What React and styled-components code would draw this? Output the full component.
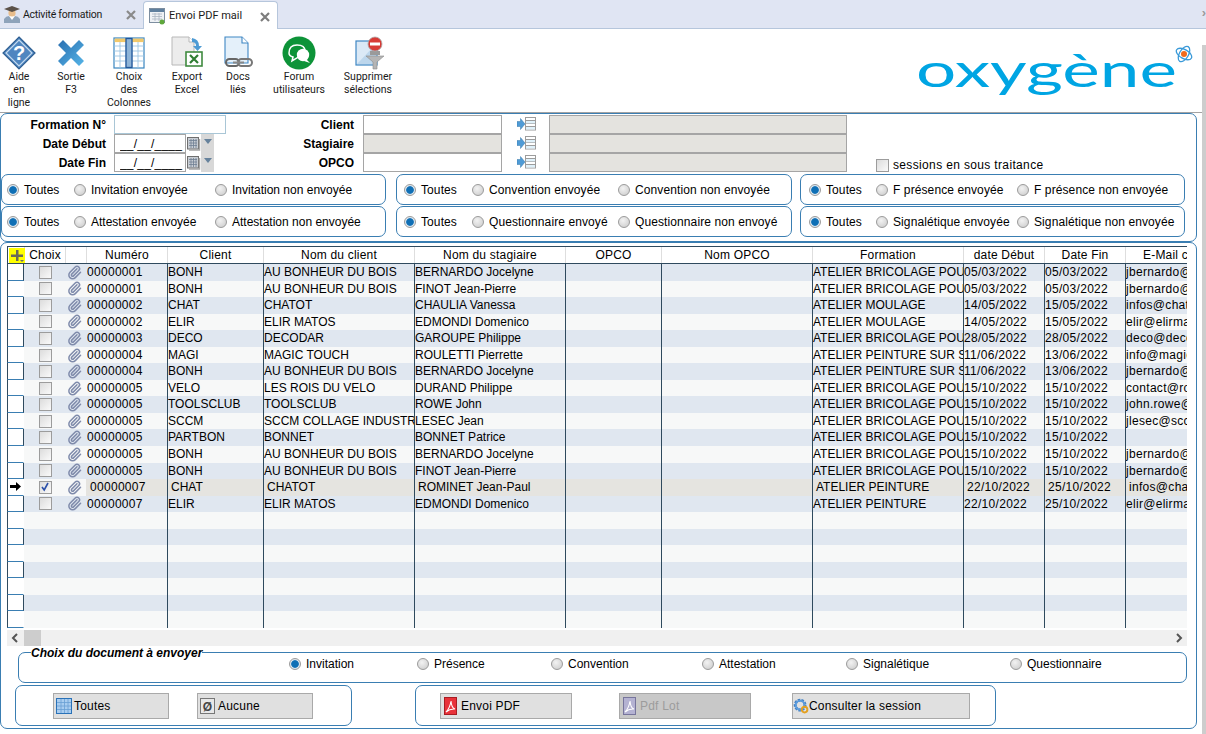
import React from 'react';
import styled, { createGlobalStyle } from 'styled-components';
import { Paperclip } from 'lucide-react';

const Global = createGlobalStyle`
  html, body { margin: 0; padding: 0; background: #fff; overflow: hidden; }
  * { box-sizing: border-box; }
  body { font-family: "Liberation Sans", Arial, sans-serif; font-size: 12px; color: #000; }
`;

const BLUE = '#3a7eb2';
const DARK = '#2f4a5e';

const Page = styled.div`
  position: relative;
  width: 1206px;
  height: 734px;
  overflow: hidden;
  background: #fff;
`;
const PageScroll = styled.div`
  position: absolute;
  right: 0;
  top: 45px;
  bottom: 0;
  width: 4px;
  background: #cdcdcd;
`;

/* Tabs */
const TabBar = styled.div`
  height: 29px;
  display: flex;
  align-items: flex-end;
  background: #e0e5f3;
  border-bottom: 1px solid #b6c6dc;
  position: relative;
`;
const Tab = styled.div`
  display: flex;
  align-items: center;
  height: 28px;
  width: ${p => p.$w}px;
  padding-left: ${p => (p.$active ? 5 : 3)}px;
  margin-bottom: ${p => (p.$active ? '-1px' : '0')};
  background: ${p => (p.$active ? '#fff' : 'transparent')};
  border: ${p => (p.$active ? '1px solid #b6c6dc' : 'none')};
  border-bottom: none;
  border-radius: 4px 4px 0 0;
  font-family: Roboto, sans-serif;
  font-size: ${p => (p.$active ? '11px' : '10.5px')};
  letter-spacing: ${p => (p.$active ? '0' : '-0.25px')};
  color: #1a1a1a;
`;
const TabLabel = styled.span`
  margin-left: ${p => p.$ml}px;
  flex: 1;
  white-space: nowrap;
`;
const TabClose = styled.svg`
  width: 10px;
  height: 10px;
  margin-right: 7px;
  margin-top: 2px;
  flex: none;
`;
const TabScrollGlyph = styled.span`
  position: absolute;
  right: 0;
  top: 5px;
  font-size: 13px;
  font-weight: bold;
  color: #9a9a9a;
`;

/* Toolbar */
const Toolbar = styled.div`
  height: 84px;
  display: flex;
  border-bottom: 1px solid #a3a3a3;
`;
const ToolItem = styled.div`
  width: ${p => p.$w}px;
  flex: none;
  display: flex;
  flex-direction: column;
  align-items: center;
  padding-top: 7px;
`;
const ToolIcon = styled.svg`
  width: 34px;
  height: 34px;
  flex: none;
`;
const ToolLabel = styled.div`
  font-family: Roboto, sans-serif;
  font-size: 10.5px;
  line-height: 13px;
  text-align: center;
  color: #1a1a1a;
  white-space: pre-line;
`;
const Logo = styled.svg`
  margin-left: auto;
  margin-right: 13px;
  margin-top: 13px;
  width: 276px;
  height: 60px;
`;

/* Panels */
const RoundPanel = styled.div`
  border: 1px solid ${BLUE};
  border-radius: 7px;
`;
const FilterPanel = styled(RoundPanel)`
  width: 1197px;
  height: 129px;
  padding-top: 1px;
`;
const FormGrid = styled.div`
  display: grid;
  grid-template-columns: 113px 112px 137px 139px 47px 298px 1fr;
  grid-auto-rows: 19px;
  height: 59px;
`;
const FieldLabel = styled.div`
  font-weight: bold;
  text-align: right;
  padding-right: ${p => p.$pr}px;
  line-height: 20px;
`;
const TextField = styled.input`
  display: block;
  width: ${p => p.$w || '100%'};
  height: 19px;
  margin: 0;
  padding: 0 3px;
  border: 1px solid ${p => (p.$blue ? '#a9c6d6' : '#a5a5a5')};
  background: ${p => (p.$off ? '#e4e3df' : '#fff')};
  font: 12px "Liberation Sans", sans-serif;
  outline: none;
`;
const DateWrap = styled.div`
  display: flex;
  align-items: center;
`;
const DateField = styled(TextField)`
  width: 72px;
  letter-spacing: 0.2px;
  padding: 0 0 0 5px;
`;
const CalButton = styled.svg`
  width: 14px;
  height: 14px;
  margin-left: 1px;
  flex: none;
`;
const DropButton = styled.div`
  width: 13px;
  height: 19px;
  background: #d8d8d8;
  display: flex;
  justify-content: center;
  padding-top: 5px;
  &::before {
    content: '';
    width: 0;
    height: 0;
    border-left: 4px solid transparent;
    border-right: 4px solid transparent;
    border-top: 5px solid #66829c;
  }
`;
const LookupIcon = styled.svg`
  width: 19px;
  height: 14px;
  margin: 2px 0 0 15px;
`;
const SousTraitance = styled.label`
  display: flex;
  align-items: center;
  gap: 4px;
  padding: 5px 0 0 29px;
  white-space: nowrap;
  letter-spacing: 0.35px;
`;
const Check = styled.span`
  width: 13px;
  height: 13px;
  flex: none;
  display: inline-flex;
  align-items: center;
  justify-content: center;
  border: 1px solid #9c9c9c;
  background: linear-gradient(135deg, #dcdcdc, #fafafa);
`;
const GroupGrid = styled.div`
  display: grid;
  grid-template-columns: 395px 404px 385px;
  row-gap: 1px;
`;
const RadioGroup = styled(RoundPanel)`
  width: ${p => p.$w}px;
  height: 31px;
  display: flex;
  align-items: center;
  padding-left: ${p => p.$pl}px;
`;
const RadioOption = styled.label`
  display: flex;
  align-items: center;
  width: ${p => p.$w}px;
  flex: none;
  gap: 5px;
  white-space: nowrap;
  letter-spacing: ${p => (p.$tight ? '0' : '0.1px')};
`;
const RadioDot = styled.span`
  width: 12px;
  height: 12px;
  flex: none;
  border-radius: 50%;
  border: 1px solid #9b9b9b;
  background: ${p =>
    p.$on
      ? 'radial-gradient(circle, #0f6fb5 0 3.4px, #d9e6f0 4.2px, #eef1f4 100%)'
      : 'radial-gradient(circle at 40% 35%, #f2f2f2, #c9c9c9)'};
`;

/* Data grid */
const GridPanel = styled(RoundPanel)`
  width: 1197px;
  height: 487px;
  padding: 3px 0 0 6px;
`;
const COLS = '17px 41px 21px 81px 96px 151px 151px 96px 151px 151px 81px 81px 62px';
const Table = styled.div`
  width: 1180px;
  height: 383px;
  overflow: hidden;
`;
const HeaderRow = styled.div`
  display: grid;
  grid-template-columns: ${COLS};
  height: 18px;
  border-top: 1px solid ${DARK};
  border-bottom: 1px solid ${DARK};
`;
const HeadCell = styled.div`
  text-align: ${p => (p.$pl ? 'left' : 'center')};
  padding-left: ${p => p.$pl || 0}px;
  line-height: 16px;
  letter-spacing: 0.2px;
  white-space: nowrap;
  overflow: hidden;
  border-left: 1px solid #dedede;
`;
const Corner = styled.div`
  border-left: 1px solid ${DARK};
  position: relative;
  overflow: visible;
`;
const CornerIcon = styled.svg`
  position: absolute;
  left: 1px;
  top: 1px;
  width: 16px;
  height: 15px;
  display: block;
`;
const Row = styled.div`
  display: grid;
  grid-template-columns: ${COLS};
  height: 16.56px;
  background: ${p => (p.$alt ? '#f7f8f8' : '#e0e7f0')};
`;
const RowHead = styled.div`
  background: #fff;
  border-left: 1px solid ${DARK};
  border-right: 1px solid ${p => (p.$alt ? '#fff' : DARK)};
  border-bottom: 1px solid ${BLUE};
  display: flex;
  align-items: center;
  justify-content: center;
`;
const CheckCell = styled.div`
  display: flex;
  align-items: center;
  justify-content: center;
  padding-left: 1px;
`;
const ClipCell = styled.div`
  display: flex;
  align-items: center;
  justify-content: center;
  padding-right: 3px;
  color: #7f8bab;
`;
const Cell = styled.div`
  border-left: 1px solid ${p => (p.$first ? 'transparent' : DARK)};
  padding-left: ${p => (p.$sel ? 3 : 0)}px;
  padding-top: 1px;
  background: ${p => (p.$sel ? '#e5e4e0' : 'transparent')};
  line-height: 15px;
  white-space: nowrap;
  overflow: hidden;
  letter-spacing: ${p => (p.$sp ? '0.3px' : '0')};
`;
const HScroll = styled.div`
  width: 1180px;
  height: 16px;
  margin-top: 1px;
  background: #f0f0f0;
  display: flex;
  align-items: center;
`;
const ScrollArrow = styled.svg`
  width: 17px;
  height: 16px;
  flex: none;
`;
const ScrollThumb = styled.div`
  width: 17px;
  height: 16px;
  background: #cdcdcd;
`;
const ScrollTrack = styled.div`
  flex: 1;
`;
const DocPanel = styled(RoundPanel)`
  position: relative;
  width: 1169px;
  height: 31px;
  margin: 6px 0 0 11px;
  display: flex;
  align-items: center;
  padding: 0 0 7px 270px;
`;
const Legend = styled.span`
  position: absolute;
  left: 12px;
  top: -7px;
  background: #fff;
  font-weight: bold;
  font-style: italic;
  line-height: 14px;
`;
const ActionRow = styled.div`
  display: flex;
  margin: 2px 0 0 8px;
`;
const ActionPanel = styled(RoundPanel)`
  width: ${p => p.$w}px;
  height: 41px;
  margin-right: ${p => p.$mr || 0}px;
  display: flex;
  align-items: center;
  padding-left: ${p => p.$pl}px;
`;
const ActionButton = styled.button`
  width: ${p => p.$w}px;
  height: 26px;
  margin-right: ${p => p.$mr || 0}px;
  flex: none;
  display: flex;
  align-items: center;
  gap: ${p => p.$gap ?? 2}px;
  padding: 0 0 0 ${p => p.$pl ?? 2}px;
  border: 1px solid #a9a9a9;
  background: ${p => (p.disabled ? '#c8c8c8' : '#e0e0e0')};
  color: ${p => (p.disabled ? '#9c9c9c' : '#000')};
  font: 12px "Liberation Sans", sans-serif;
  letter-spacing: 0.2px;
`;
const BtnIcon = styled.svg`
  width: 16px;
  height: 18px;
  flex: none;
`;

/* Icons */
const X = ({ c = '#8a8a8a' }) => (
  <TabClose viewBox="0 0 10 10">
    <path d="M1 1 L9 9 M9 1 L1 9" stroke={c} strokeWidth="2.2" />
  </TabClose>
);
const GradIcon = () => (
  <svg width="18" height="18" viewBox="0 0 18 18" style={{ flex: 'none' }}>
    <path d="M1 14 Q3 11 6 11 L12 11 Q15 11 17 14 L17 18 L1 18Z" fill="#8ea3ba" />
    <path d="M6 11 L9 15 L12 11Z" fill="#fff" />
    <circle cx="9" cy="8" r="3.6" fill="#e8bd8c" />
    <path d="M1 4 L9 1 L17 4 L9 7Z" fill="#5b5148" />
  </svg>
);
const CalTabIcon = () => (
  <svg width="17" height="18" viewBox="0 0 17 18" style={{ flex: 'none' }}>
    <rect x="0.5" y="1.5" width="15" height="14" fill="#eef1f5" stroke="#7d8ea0" />
    <rect x="1" y="2" width="14" height="3" fill="#5f7f9e" />
    <path d="M3 7h10M3 9.5h10M3 12h10M6 6v8M10 6v8" stroke="#a9b5c2" strokeWidth="0.8" />
    <circle cx="13" cy="15" r="2.5" fill="#5fa83b" />
  </svg>
);
const HelpIcon = () => (
  <ToolIcon viewBox="0 0 34 34">
    <path d="M17 1 L33 17 L17 33 L1 17Z" fill="#4f86c0" stroke="#2f5f92" strokeWidth="1.2" />
    <path d="M17 4 L30 17 L17 30 L4 17Z" fill="none" stroke="#c5daee" strokeWidth="1.2" />
    <text x="17" y="24" textAnchor="middle" fontFamily="Liberation Sans" fontWeight="bold" fontSize="20" fill="#fff">?</text>
  </ToolIcon>
);
const ExitIcon = () => (
  <ToolIcon viewBox="0 0 34 34">
    <defs>
      <linearGradient id="ex" x1="0" y1="0" x2="1" y2="1">
        <stop offset="0" stopColor="#2a6fb0" />
        <stop offset="1" stopColor="#56b5e8" />
      </linearGradient>
    </defs>
    <path d="M9 4 L17 12 L25 4 L30 9 L22 17 L30 25 L25 30 L17 22 L9 30 L4 25 L12 17 L4 9Z" fill="url(#ex)" />
  </ToolIcon>
);
const ColumnsIcon = () => (
  <ToolIcon viewBox="0 0 34 34">
    <rect x="2" y="2" width="30" height="30" fill="#fff" stroke="#3a86c0" strokeWidth="1.2" />
    <rect x="2.6" y="2.6" width="29" height="3.5" fill="#f2c86a" />
    <path d="M2 10h30M2 15h30M2 20h30M2 25h30M8 6v26M14 6v26M20 6v26M26 6v26" stroke="#9cc4e2" strokeWidth="0.9" />
    <rect x="14" y="2.5" width="6" height="29" fill="#8eb4d8" stroke="#22569a" strokeWidth="1.3" />
  </ToolIcon>
);
const ExcelIcon = () => (
  <ToolIcon viewBox="0 0 34 34">
    <path d="M2 1 H19 L24 6 V29 H2Z" fill="#ececec" stroke="#b8b8b8" />
    <path d="M19 1 V6 H24" fill="#fff" stroke="#b8b8b8" />
    <path d="M22 2 Q29 3 29 10 L32 10 L27.5 15 L23 10 L26 10 Q26 6 22 6Z" fill="#4e9bd4" />
    <rect x="16" y="16" width="16" height="14" fill="#fff" stroke="#3f8a3f" strokeWidth="1.6" />
    <path d="M20 19 L28 27 M28 19 L20 27" stroke="#2f7d32" strokeWidth="2.2" />
  </ToolIcon>
);
const DocsIcon = () => (
  <ToolIcon viewBox="0 0 34 34">
    <path d="M4 1 H21 L27 7 V27 H4Z" fill="#e4f0fa" stroke="#3f87c4" strokeWidth="1.1" />
    <path d="M21 1 V7 H27" fill="#fff" stroke="#3f87c4" strokeWidth="1.1" />
    <rect x="5" y="23" width="13" height="7" rx="3.5" fill="none" stroke="#666" strokeWidth="2" />
    <rect x="17" y="23" width="14" height="7" rx="3.5" fill="none" stroke="#777" strokeWidth="2" />
    <rect x="12" y="25.5" width="11" height="2" fill="#888" />
  </ToolIcon>
);
const ForumIcon = () => (
  <ToolIcon viewBox="0 0 34 34">
    <circle cx="17" cy="17" r="16.5" fill="#0d9338" />
    <path d="M7 17 Q7 9 15 9 Q23 9 23 15 L15 22 L10 25 L11 21 Q7 20 7 17Z" fill="none" stroke="#fff" strokeWidth="1.5" />
    <circle cx="21" cy="19" r="6.2" fill="#fff" />
    <path d="M24 23 L28 27 L22 25Z" fill="#fff" />
  </ToolIcon>
);
const DeleteIcon = () => (
  <ToolIcon viewBox="0 0 34 34">
    <rect x="5" y="5" width="21" height="24" fill="#dbe9f6" stroke="#3f87c4" strokeWidth="1.2" />
    <path d="M6 28 L25 8 V28Z" fill="#bcd6ec" />
    <rect x="19" y="15" width="10" height="4" fill="#9a9a9a" />
    <path d="M15 20 H33 L26 26 V33 H22 V26Z" fill="#b5b5b5" stroke="#8c8c8c" strokeWidth="0.6" />
    <circle cx="24" cy="8" r="7" fill="#d83a35" stroke="#a9a9a9" strokeWidth="0.8" />
    <rect x="19" y="6.5" width="10" height="3" fill="#fff" />
  </ToolIcon>
);
const Lookup = () => (
  <LookupIcon viewBox="0 0 19 14">
    <path d="M0 4.5 H3.5 V1.5 L8 7 L3.5 12.5 V9.5 H0Z" fill="#4f9bd6" stroke="#3a78a8" strokeWidth="0.5" />
    <rect x="8.5" y="0.5" width="10" height="12.5" fill="#fff" stroke="#9c9c9c" />
    <path d="M9 3.5h9M9 6.5h9M9 9.5h9" stroke="#9c9c9c" />
    <rect x="9" y="4" width="9" height="2.4" fill="#dff1fa" />
    <rect x="9" y="10" width="9" height="2.4" fill="#dff1fa" />
  </LookupIcon>
);
const Cal = () => (
  <CalButton viewBox="0 0 14 14">
    <rect x="0.5" y="0.5" width="11" height="11.5" fill="#c9ced4" stroke="#6f6f6f" />
    <path d="M2 3.5h8M2 6h8M2 8.5h8M4 2v9M6.5 2v9M9 2v9" stroke="#6f7f93" strokeWidth="0.8" />
    <path d="M12.5 2v11H2" stroke="#a5a5a5" strokeWidth="1.4" fill="none" />
  </CalButton>
);
const TickMark = () => (
  <svg width="10" height="10" viewBox="0 0 10 10">
    <path d="M2 5 L4.2 8 L8 1" fill="none" stroke="#2a4fa8" strokeWidth="1.6" />
  </svg>
);
const RowArrow = () => (
  <svg width="11" height="9" viewBox="0 0 11 9">
    <path d="M0 3 H6 V0 L11 4.5 L6 9 V6 H0Z" fill="#000" />
  </svg>
);
const ToutesIcon = () => (
  <BtnIcon viewBox="0 0 16 18">
    <rect x="0.5" y="1.5" width="15" height="15" fill="#a9cdf0" stroke="#2a72b8" />
    <path d="M1 5.5h14M1 9h14M1 12.5h14M5 2v14M8.5 2v14M12 2v14" stroke="#6aa0d4" strokeWidth="0.8" />
  </BtnIcon>
);
const AucuneIcon = () => (
  <BtnIcon viewBox="0 0 16 18">
    <rect x="0.5" y="1.5" width="14" height="15" fill="#e8e8e8" stroke="#777" />
    <text x="7.5" y="13.5" textAnchor="middle" fontFamily="Liberation Sans" fontWeight="bold" fontSize="12" fill="#444">Ø</text>
  </BtnIcon>
);
const PdfIcon = ({ off }) => (
  <BtnIcon viewBox="0 0 16 18">
    <rect x="1.5" y="0.5" width="12" height="17" fill={off ? '#b4b2d2' : '#e8323a'} stroke={off ? '#77759c' : '#a81c22'} />
    <path d="M3 15 Q7 11 8 4 Q8.5 11 12 12 Q7 11.5 3 15Z" fill="none" stroke="#fff" strokeWidth="1.1" />
  </BtnIcon>
);
const GearIcon = () => (
  <BtnIcon viewBox="0 0 18 18" style={{ width: 16 }}>
    <circle cx="8" cy="8" r="5.5" fill="none" stroke="#3f7fc4" strokeWidth="3.4" strokeDasharray="2.6 1.2" />
    <circle cx="8" cy="8" r="5" fill="none" stroke="#5b9bdc" strokeWidth="2.2" />
    <circle cx="13" cy="13" r="3.2" fill="none" stroke="#e3a020" strokeWidth="2.2" />
  </BtnIcon>
);

const D = (num, code, client, stag, form, d1, d2, mail) => ({ num, code, client, stag, form, d1, d2, mail });
const BR = 'ATELIER BRICOLAGE POUR ADULTES';
const PS = 'ATELIER PEINTURE SUR SOIE';
const DATA = [
  D('00000001', 'BONH', 'AU BONHEUR DU BOIS', 'BERNARDO Jocelyne', BR, '05/03/2022', '05/03/2022', 'jbernardo@aubonheur.fr'),
  D('00000001', 'BONH', 'AU BONHEUR DU BOIS', 'FINOT Jean-Pierre', BR, '05/03/2022', '05/03/2022', 'jbernardo@aubonheur.fr'),
  D('00000002', 'CHAT', 'CHATOT', 'CHAULIA Vanessa', 'ATELIER MOULAGE', '14/05/2022', '15/05/2022', 'infos@chatot.fr'),
  D('00000002', 'ELIR', 'ELIR MATOS', 'EDMONDI Domenico', 'ATELIER MOULAGE', '14/05/2022', '15/05/2022', 'elir@elirmatos.fr'),
  D('00000003', 'DECO', 'DECODAR', 'GAROUPE Philippe', BR, '28/05/2022', '28/05/2022', 'deco@decodar.fr'),
  D('00000004', 'MAGI', 'MAGIC TOUCH', 'ROULETTI Pierrette', PS, '11/06/2022', '13/06/2022', 'info@magictouch.fr'),
  D('00000004', 'BONH', 'AU BONHEUR DU BOIS', 'BERNARDO Jocelyne', PS, '11/06/2022', '13/06/2022', 'jbernardo@aubonheur.fr'),
  D('00000005', 'VELO', 'LES ROIS DU VELO', 'DURAND Philippe', BR, '15/10/2022', '15/10/2022', 'contact@roisduvelo.fr'),
  D('00000005', 'TOOLSCLUB', 'TOOLSCLUB', 'ROWE John', BR, '15/10/2022', '15/10/2022', 'john.rowe@toolsclub.fr'),
  D('00000005', 'SCCM', 'SCCM COLLAGE INDUSTRIEL', 'LESEC Jean', BR, '15/10/2022', '15/10/2022', 'jlesec@sccm.fr'),
  D('00000005', 'PARTBON', 'BONNET', 'BONNET Patrice', BR, '15/10/2022', '15/10/2022', ''),
  D('00000005', 'BONH', 'AU BONHEUR DU BOIS', 'BERNARDO Jocelyne', BR, '15/10/2022', '15/10/2022', 'jbernardo@aubonheur.fr'),
  D('00000005', 'BONH', 'AU BONHEUR DU BOIS', 'FINOT Jean-Pierre', BR, '15/10/2022', '15/10/2022', 'jbernardo@aubonheur.fr'),
  D('00000007', 'CHAT', 'CHATOT', 'ROMINET Jean-Paul', 'ATELIER PEINTURE', '22/10/2022', '25/10/2022', 'infos@chatot.fr'),
  D('00000007', 'ELIR', 'ELIR MATOS', 'EDMONDI Domenico', 'ATELIER PEINTURE', '22/10/2022', '25/10/2022', 'elir@elirmatos.fr'),
];
const TOTAL_ROWS = 22;
const SELECTED = 13;

const HEADS = ['Choix', '', 'Numéro', 'Client', 'Nom du client', 'Nom du stagiaire', 'OPCO', 'Nom OPCO', 'Formation', 'date Début', 'Date Fin'];

const TOOLS = [
  [38, HelpIcon, 'Aide\nen\nligne'],
  [66, ExitIcon, 'Sortie\nF3'],
  [50, ColumnsIcon, 'Choix\ndes\nColonnes'],
  [66, ExcelIcon, 'Export\nExcel'],
  [36, DocsIcon, 'Docs\nliés'],
  [86, ForumIcon, 'Forum\nutilisateurs'],
  [52, DeleteIcon, 'Supprimer\nsélections'],
];

const GROUPS = [
  { w: 385, pl: 5, tight: true, opts: [['Toutes', 67, 1], ['Invitation envoyée', 141], ['Invitation non envoyée', 170]] },
  { w: 396, pl: 7, opts: [['Toutes', 68, 1], ['Convention envoyée', 146], ['Convention non envoyée', 170]] },
  { w: 385, pl: 8, opts: [['Toutes', 67, 1], ['F présence envoyée', 141], ['F présence non envoyée', 160]] },
  { w: 385, pl: 5, tight: true, opts: [['Toutes', 67, 1], ['Attestation envoyée', 141], ['Attestation non envoyée', 170]] },
  { w: 396, pl: 7, opts: [['Toutes', 68, 1], ['Questionnaire envoyé', 146], ['Questionnaire non envoyé', 170]] },
  { w: 385, pl: 8, opts: [['Toutes', 67, 1], ['Signalétique envoyée', 141], ['Signalétique non envoyée', 166]] },
];

const DOCS = [
  ['Invitation', 128, 1],
  ['Présence', 134],
  ['Convention', 151],
  ['Attestation', 144],
  ['Signalétique', 164],
  ['Questionnaire', 120],
];

const EMPTY = D('', '', '', '', '', '', '', '');

const DateInput = () => (
  <DateWrap>
    <DateField readOnly value="__/__/____" />
    <Cal />
    <DropButton />
  </DateWrap>
);

export default function App() {
  const rows = Array.from({ length: TOTAL_ROWS }, (_, i) => DATA[i] || EMPTY);
  return (
    <Page>
      <Global />
      <TabBar>
        <Tab $w={143}>
          <GradIcon />
          <TabLabel $ml={2}>Activité formation</TabLabel>
          <X />
        </Tab>
        <Tab $w={135} $active>
          <CalTabIcon />
          <TabLabel $ml={3}>Envoi PDF mail</TabLabel>
          <X c="#7d7d7d" />
        </Tab>
        <TabScrollGlyph>›</TabScrollGlyph>
      </TabBar>

      <Toolbar>
        {TOOLS.map(([w, Icon, label]) => (
          <ToolItem key={label} $w={w}>
            <Icon />
            <ToolLabel>{label}</ToolLabel>
          </ToolItem>
        ))}
        <Logo viewBox="0 0 276 60">
          <text
            x="-1"
            y="45"
            textLength="261"
            lengthAdjust="spacingAndGlyphs"
            fontFamily="Lato, sans-serif"
            fontSize="47"
            fill="#00a5e3"
          >
            oxygène
          </text>
          <g transform="translate(267 12)" fill="none" stroke="#3a9ad9" strokeWidth="1.3">
            <ellipse rx="8.5" ry="4.5" transform="rotate(30)" />
            <ellipse rx="8.5" ry="4.5" transform="rotate(-60)" />
            <circle r="3" fill="#f26a1b" stroke="none" />
          </g>
        </Logo>
      </Toolbar>

      <FilterPanel>
        <FormGrid>
          <FieldLabel $pr={8}>Formation N°</FieldLabel>
          <TextField $blue readOnly />
          <FieldLabel $pr={9}>Client</FieldLabel>
          <TextField readOnly />
          <Lookup />
          <TextField $off readOnly />
          <div />

          <FieldLabel $pr={8}>Date Début</FieldLabel>
          <DateInput />
          <FieldLabel $pr={9}>Stagiaire</FieldLabel>
          <TextField $off readOnly />
          <Lookup />
          <TextField $off readOnly />
          <div />

          <FieldLabel $pr={8}>Date Fin</FieldLabel>
          <DateInput />
          <FieldLabel $pr={9}>OPCO</FieldLabel>
          <TextField readOnly />
          <Lookup />
          <TextField $off readOnly />
          <SousTraitance>
            <Check />
            sessions en sous traitance
          </SousTraitance>
        </FormGrid>
        <GroupGrid>
          {GROUPS.map(g => (
            <RadioGroup key={g.opts[1][0]} $pl={g.pl} $w={g.w}>
              {g.opts.map(([label, w, on]) => (
                <RadioOption key={label} $w={w} $tight={g.tight}>
                  <RadioDot $on={!!on} />
                  {label}
                </RadioOption>
              ))}
            </RadioGroup>
          ))}
        </GroupGrid>
      </FilterPanel>

      <GridPanel>
        <Table>
          <HeaderRow>
            <Corner>
              <CornerIcon viewBox="0 0 16 15">
                <rect width="16" height="15" fill="#ffff00" />
                <path d="M7 2h2.500v4.500H14V9H9.500v4H7V9H2V6.500h5Z" fill="#6b6b5a" />
                <path d="M11 12h4l-2 2Z" fill="#6b6b6b" />
              </CornerIcon>
            </Corner>
            {HEADS.map((h, i) => (
              <HeadCell key={i}>{h}</HeadCell>
            ))}
            <HeadCell $pl={17}>E-Mail client</HeadCell>
          </HeaderRow>
          {rows.map((r, i) => {
            const sel = i === SELECTED;
            const has = !!r.num;
            return (
              <Row key={i} $alt={i % 2 === 1}>
                <RowHead $alt={i % 2 === 1}>{sel && <RowArrow />}</RowHead>
                <CheckCell>{has && <Check>{sel && <TickMark />}</Check>}</CheckCell>
                <ClipCell>{has && <Paperclip size={15} strokeWidth={2.4} />}</ClipCell>
                <Cell $first $sp $sel={sel}>{r.num}</Cell>
                <Cell $sel={sel}>{r.code}</Cell>
                <Cell $sel={sel}>{r.client}</Cell>
                <Cell $sel={sel}>{r.stag}</Cell>
                <Cell $sel={sel} />
                <Cell $sel={sel} />
                <Cell $sel={sel}>{r.form}</Cell>
                <Cell $sp $sel={sel}>{r.d1}</Cell>
                <Cell $sp $sel={sel}>{r.d2}</Cell>
                <Cell $sp $sel={sel}>{r.mail}</Cell>
              </Row>
            );
          })}
        </Table>
        <HScroll>
          <ScrollArrow viewBox="0 0 17 16">
            <path d="M10 4 L6 8 L10 12" fill="none" stroke="#555" strokeWidth="2" />
          </ScrollArrow>
          <ScrollThumb />
          <ScrollTrack />
          <ScrollArrow viewBox="0 0 17 16">
            <path d="M7 4 L11 8 L7 12" fill="none" stroke="#555" strokeWidth="2" />
          </ScrollArrow>
        </HScroll>
        <DocPanel>
          <Legend>Choix du document à envoyer</Legend>
          {DOCS.map(([label, w, on]) => (
            <RadioOption key={label} $w={w} $tight>
              <RadioDot $on={!!on} />
              {label}
            </RadioOption>
          ))}
        </DocPanel>
        <ActionRow>
          <ActionPanel $w={337} $pl={37} $mr={63}>
            <ActionButton $w={116} $mr={28}><ToutesIcon />Toutes</ActionButton>
            <ActionButton $w={116}><AucuneIcon />Aucune</ActionButton>
          </ActionPanel>
          <ActionPanel $w={581} $pl={24}>
            <ActionButton $w={132} $mr={47}><PdfIcon />Envoi PDF</ActionButton>
            <ActionButton $w={132} $mr={41} disabled><PdfIcon off />Pdf Lot</ActionButton>
            <ActionButton $w={178} $gap={0} $pl={0}><GearIcon />Consulter la session</ActionButton>
          </ActionPanel>
        </ActionRow>
      </GridPanel>
      <PageScroll />
    </Page>
  );
}
